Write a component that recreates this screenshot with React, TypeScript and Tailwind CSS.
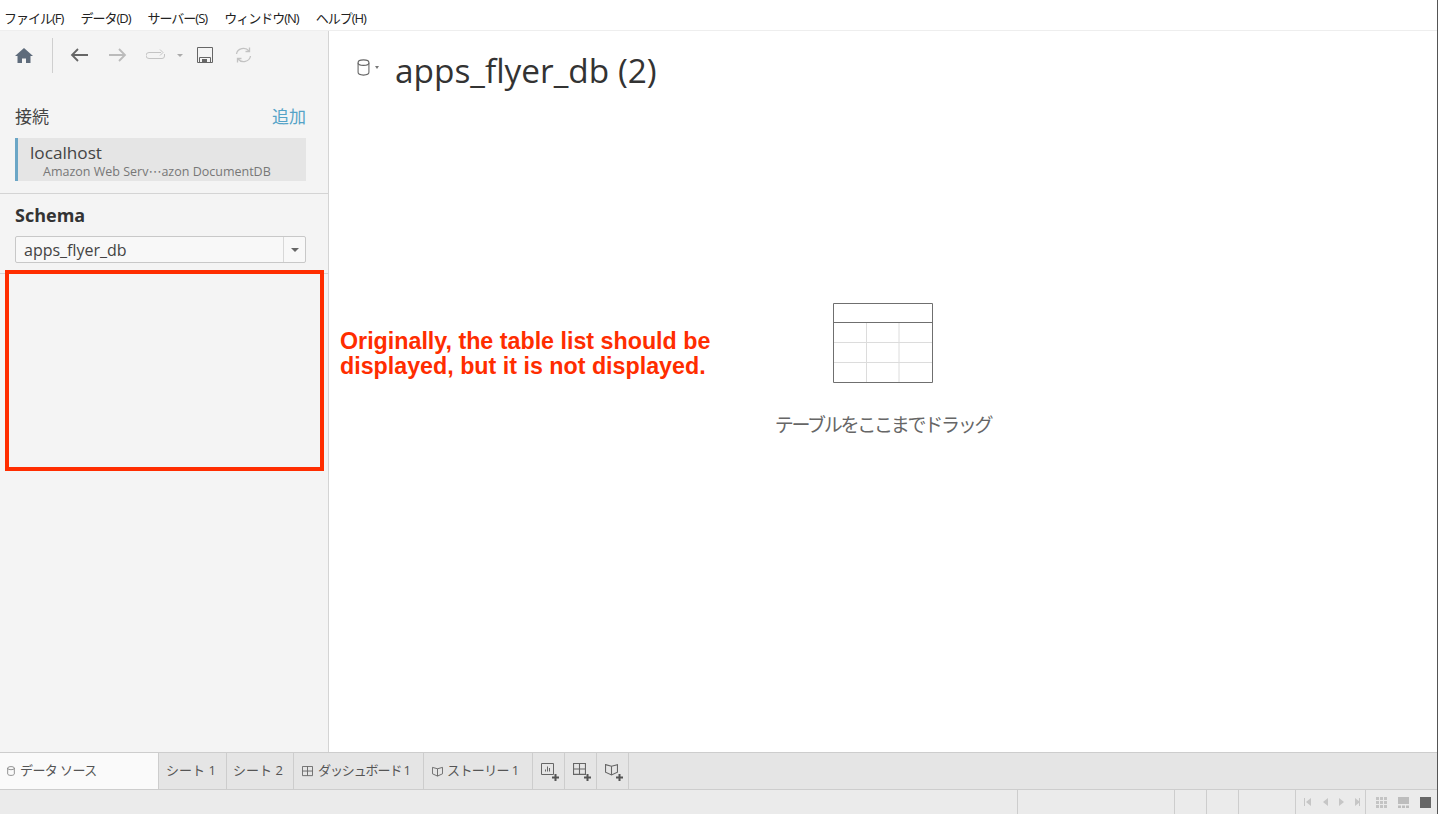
const JP = "font-['Open_Sans','Noto_Sans_CJK_JP',sans-serif]";

const menus = ['ファイル(F)', 'データ(D)', 'サーバー(S)', 'ウィンドウ(N)', 'ヘルプ(H)'];

const DbIcon = ({ className }: { className?: string }) => (
  <svg className={className} viewBox="0 0 12 14" preserveAspectRatio="none" fill="none" stroke="currentColor" strokeWidth={1}>
    <ellipse cx="6" cy="3" rx="5" ry="2.2" />
    <path d="M1 3v8c0 1.2 2.2 2.2 5 2.2s5-1 5-2.2V3" />
  </svg>
);

const GridIcon = ({ className }: { className?: string }) => (
  <svg className={className} viewBox="0 0 12 12" fill="none" stroke="currentColor" strokeWidth={1}>
    <path d="M.5.5h11v10H.5zM.5 5.5h11M6 .5v10" />
  </svg>
);

const BookIcon = ({ className }: { className?: string }) => (
  <svg className={className} viewBox="0 0 12 12" fill="none" stroke="currentColor" strokeWidth={1}>
    <path d="M.5 1.5 6 3l5.500-1.500v7L6 11 .5 8.500zM6 3v8" />
  </svg>
);

const Plus = () => (
  <svg className="absolute left-[13px] top-[13px] h-[7px] w-[7px] text-[#555]" viewBox="0 0 7 7" fill="currentColor">
    <path d="M2.500 0h2v2.500H7v2H4.500V7h-2V4.500H0v-2h2.500z" />
  </svg>
);

function Toolbar() {
  return (
    <div className="flex h-[48px] items-center">
      <svg className="ml-[15px] h-[15px] w-[18px] text-[#5e6b7b]" viewBox="0 0 18 15" fill="currentColor">
        <path d="M9 0 0 8h2.500v7h4.500v-4.500h4V15h4.500V8H18z" />
      </svg>
      <div className="ml-[19px] h-[35px] w-px bg-[#cfcfcf]" />
      <svg className="ml-[17px] h-[14px] w-[18px] text-[#666]" viewBox="0 0 18 14" fill="none" stroke="currentColor" strokeWidth={1.8}>
        <path d="M18 7H2M8 1 2 7l6 6" />
      </svg>
      <svg className="ml-[21px] h-[14px] w-[18px] text-[#bbb]" viewBox="0 0 18 14" fill="none" stroke="currentColor" strokeWidth={1.8}>
        <path d="M0 7h16M10 1l6 6-6 6" />
      </svg>
      <svg className="ml-[19px] h-[12px] w-[19px] text-[#c4c4c4]" viewBox="0 0 19 12" fill="none" stroke="currentColor" strokeWidth={1}>
        <path d="M15 3.500H3a2.500 2.500 0 0 0 0 6h13a2.500 2.500 0 0 0 2.500-2.500V5" />
        <path d="M14 .5l3 3-3 3" />
      </svg>
      <div className="ml-[12px] mt-[1px] h-0 w-0 border-x-[3px] border-t-[3px] border-x-transparent border-t-[#aaa]" />
      <svg className="ml-[14px] h-[16px] w-[16px] text-[#666]" viewBox="0 0 16 16" fill="none" stroke="currentColor" strokeWidth={1}>
        <path d="M.5.5h15v15H.5z" />
        <path d="M2.500 15.500v-5h11v5" />
        <path d="M5 12h5v3.500H5z" fill="currentColor" stroke="none" />
      </svg>
      <svg className="ml-[22px] h-[16px] w-[17px] text-[#c2c2c2]" viewBox="0 0 17 16" fill="none" stroke="currentColor" strokeWidth={1.300}>
        <path d="M1.500 7A7 6.500 0 0 1 14 4M15.500 9A7 6.500 0 0 1 3 12" />
        <path d="M14.500 .5V4.500h-4M2.500 15.500v-4h4" />
      </svg>
    </div>
  );
}

function Sidebar() {
  return (
    <aside className="flex w-[329px] shrink-0 flex-col border-r border-[#d4d4d4] bg-[#f4f4f4]">
      <Toolbar />
      <div className="mt-[26px] flex items-center justify-between pl-[15px] pr-[22px] text-[17px] leading-[24px]">
        <span className="text-[#444]">接続</span>
        <span className="text-[#55a3c7]">追加</span>
      </div>
      <div className="ml-[15px] mt-[9px] h-[43px] w-[291px] border-l-[3px] border-[#6ba6c6] bg-[#e5e5e5] pl-[12px]">
        <div className="pt-[4px] text-[17.2px] leading-[22px] text-[#444]">localhost</div>
        <div className="whitespace-nowrap pl-[13px] text-[12.5px] leading-[16px] text-[#777]">
          Amazon Web Serv<span className="font-['DejaVu_Sans',sans-serif] text-[13px]">⋯</span>azon DocumentDB
        </div>
      </div>
      <div className="mt-[12px] h-px bg-[#d4d4d4]" />
      <div className="mt-[9px] pl-[15px] text-[18px] font-bold leading-[24px] text-[#333]">Schema</div>
      <div className="ml-[15px] mt-[9px] flex h-[27px] w-[291px] items-center rounded-[2px] border border-[#c8c8c8] bg-[#f8f8f8]">
        <span className="flex-1 pl-[8px] text-[16px] text-[#444]">apps_flyer_db</span>
        <div className="flex h-full w-[22px] items-center justify-center border-l border-[#d8d8d8]">
          <div className="h-0 w-0 border-x-[4px] border-t-[4px] border-x-transparent border-t-[#666]" />
        </div>
      </div>
      <div className="mt-[10px] h-px bg-[#d4d4d4]" />
    </aside>
  );
}

function TableIcon() {
  return (
    <svg className="h-[80px] w-[100px]" viewBox="0 0 100 80" fill="none">
      <path d="M33.500 20v59M66 20v59M1 39.500h98M1 59.500h98" stroke="#dcdcdc" strokeWidth={1} />
      <path d="M.5.5h99v79H.5zM.5 19.500h99" stroke="#6f6f6f" strokeWidth={1} />
    </svg>
  );
}

function Canvas() {
  return (
    <main className="relative flex min-w-0 flex-1 flex-col bg-white">
      <div className="flex items-center pl-[28px] pt-[17px]">
        <DbIcon className="mb-[5px] h-[17px] w-[13px] text-[#666]" />
        <div className="mb-[5px] ml-[5px] h-0 w-0 border-x-[2.500px] border-t-[3px] border-x-transparent border-t-[#777]" />
        <h1 className="ml-[16px] text-[33.4px] leading-[44px] text-[#333]">apps_flyer_db (2)</h1>
      </div>
      <div className="ml-[504px] mt-[211px] flex w-[100px] flex-col items-center">
        <TableIcon />
        <div className="mt-[27px] whitespace-nowrap text-[19px] leading-[30px] tracking-[-2.25px] text-[#666]">
          テーブルをここまでドラッグ
        </div>
      </div>
    </main>
  );
}

const sheetTab = 'flex shrink-0 items-center border-r border-[#cdcdcd] text-[13px] text-[#555] whitespace-nowrap';

function Tabs() {
  return (
    <div className="flex h-[38px] shrink-0 border-y border-[#cdcdcd] bg-[#e5e5e5]">
      <div className="flex w-[159px] shrink-0 items-center gap-[5px] border-r border-[#cdcdcd] bg-[#fafafa] pl-[7px] text-[13px] tracking-[-0.6px] text-[#555]">
        <DbIcon className="h-[10px] w-[8px] text-[#666]" />
        <span>データ ソース</span>
      </div>
      <div className={`${sheetTab} w-[68px] pl-[7px]`}>シート 1</div>
      <div className={`${sheetTab} w-[67px] pl-[6px]`}>シート 2</div>
      <div className={`${sheetTab} w-[130px] gap-[5px] pl-[8px] tracking-[-1.1px]`}>
        <GridIcon className="h-[11px] w-[11px] text-[#666]" />
        <span>ダッシュボード 1</span>
      </div>
      <div className={`${sheetTab} w-[109px] gap-[4px] pl-[8px] tracking-[-0.6px]`}>
        <BookIcon className="h-[11px] w-[11px] text-[#666]" />
        <span>ストーリー 1</span>
      </div>
      <div className={`${sheetTab} w-[32px] justify-center`}>
        <div className="relative h-[20px] w-[20px]">
          <svg className="absolute left-[2px] top-[2px] h-[14px] w-[14px] text-[#666]" viewBox="0 0 14 14" fill="none" stroke="currentColor" strokeWidth={1}>
            <path d="M.5.5h12v11H.5zM4.500 8.500v-2M6.500 8.500v-5M8.500 8.500v-3.500" />
          </svg>
          <Plus />
        </div>
      </div>
      <div className={`${sheetTab} w-[32px] justify-center`}>
        <div className="relative h-[20px] w-[20px]">
          <GridIcon className="absolute left-[2px] top-[2px] h-[13px] w-[13px] text-[#666]" />
          <Plus />
        </div>
      </div>
      <div className={`${sheetTab} w-[32px] justify-center`}>
        <div className="relative h-[20px] w-[20px]">
          <BookIcon className="absolute left-[2px] top-[2px] h-[13px] w-[13px] text-[#666]" />
          <Plus />
        </div>
      </div>
    </div>
  );
}

function StatusBar() {
  return (
    <div className="flex h-[24px] shrink-0 bg-[#ebebeb]">
      <div className="flex-1 border-r border-[#cdcdcd]" />
      <div className="w-[157px] border-r border-[#cdcdcd]" />
      <div className="w-[32px] border-r border-[#cdcdcd]" />
      <div className="w-[32px] border-r border-[#cdcdcd]" />
      <div className="w-[57px] border-r border-[#cdcdcd]" />
      <div className="flex w-[70px] items-center border-r border-[#cdcdcd] pl-[8px] text-[#c6c6c6]">
        <svg className="h-[8px] w-[56px]" viewBox="0 0 56 8" fill="currentColor">
          <path d="M0 0h1v8H0zM7 0v8L2 4zM24 0v8l-5-4zM35 0l5 4-5 4zM51 0l5 4-5 4z" />
          <path d="M55 0h1v8h-1z" />
        </svg>
      </div>
      <div className="flex w-[71px] shrink-0 items-center gap-[11px] pl-[10px]">
        <svg className="h-[11px] w-[11px] text-[#c4c4c4]" viewBox="0 0 11 11" fill="currentColor">
          <path d="M0 0h3v3H0zM4 0h3v3H4zM8 0h3v3H8zM0 4h3v3H0zM4 4h3v3H4zM8 4h3v3H8zM0 8h3v3H0zM4 8h3v3H4zM8 8h3v3H8z" />
        </svg>
        <svg className="h-[11px] w-[11px] text-[#bdbdbd]" viewBox="0 0 11 11" fill="currentColor">
          <path d="M0 0h11v7H0zM0 8.500h3V11H0zM4 8.500h3V11H4zM8 8.500h3V11H8z" />
        </svg>
        <div className="h-[11px] w-[11px] bg-[#666]" />
      </div>
    </div>
  );
}

export default function App() {
  return (
    <div className={`relative flex h-[814px] w-[1438px] flex-col overflow-hidden border-r border-[#555] bg-white ${JP}`}>
      <nav className="flex h-[31px] shrink-0 items-center gap-[17px] border-b border-[#eeeeee] pl-[4px] pt-[8px] text-[13px] tracking-[-1px] text-[#222]">
        {menus.map((m) => (
          <span key={m}>{m}</span>
        ))}
      </nav>
      <div className="flex min-h-0 flex-1">
        <Sidebar />
        <Canvas />
      </div>
      <Tabs />
      <StatusBar />
      {/* annotation drawn over the screenshot */}
      <div className="absolute left-[5px] top-[270px] h-[201px] w-[319px] border-[4px] border-[#ff2d00]" />
      <p className="absolute left-[340px] top-[329px] font-['Liberation_Sans',sans-serif] text-[23.25px] font-bold leading-[25px] text-[#ff2d00]">
        Originally, the table list should be
        <br />
        displayed, but it is not displayed.
      </p>
    </div>
  );
}
